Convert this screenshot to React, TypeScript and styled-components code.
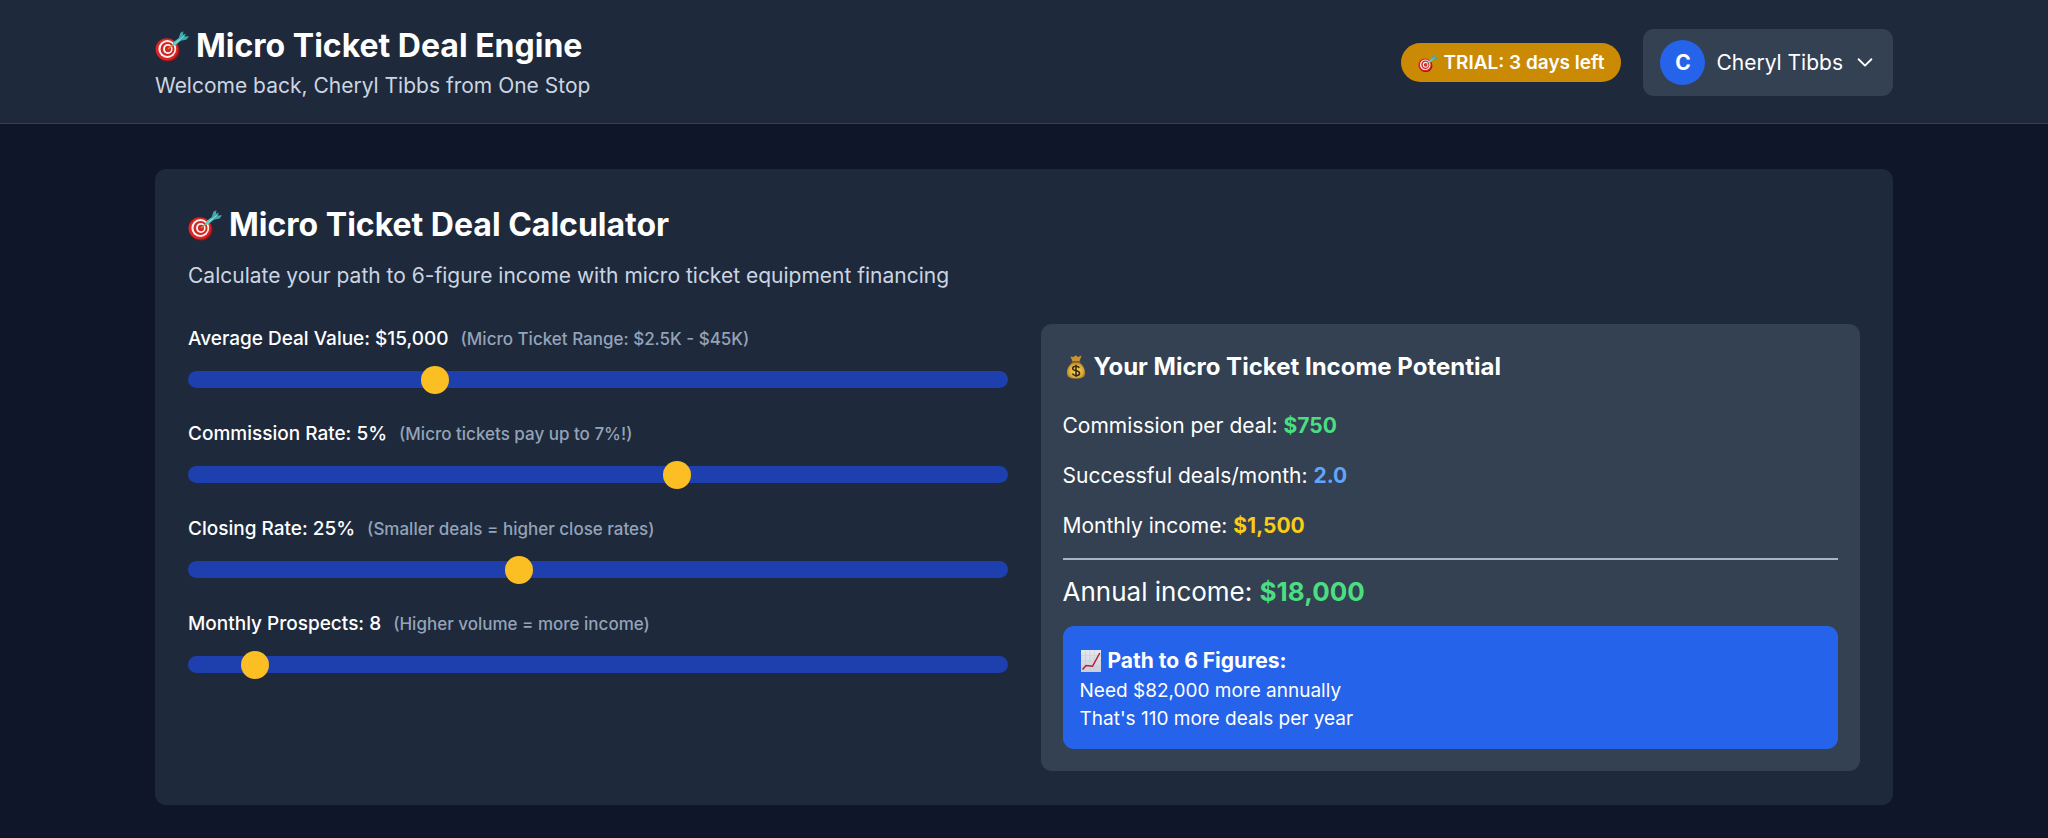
import React, { useState } from "react";
import styled, { createGlobalStyle } from "styled-components";

const GlobalStyle = createGlobalStyle`
  *, *::before, *::after { box-sizing: border-box; }
  body {
    margin: 0;
    background: #101629;
    color: #ffffff;
    font-family: Inter, "Liberation Sans", sans-serif;
    font-size: 21px;
    line-height: 33px;
    -webkit-font-smoothing: antialiased;
  }
  h1, h2, h3, p { margin: 0; }
`;

const Page = styled.div`
  min-height: 100vh;
  background: #101629;
`;

const Container = styled.div`
  width: 100%;
  max-width: 1782px;
  margin: 0 auto;
  padding: 0 22px;
`;

const Header = styled.header`
  background: #1e293b;
  border-bottom: 1px solid #334155;
`;

const HeaderRow = styled(Container)`
  display: flex;
  align-items: center;
  justify-content: space-between;
  flex-wrap: wrap;
  gap: 22px;
  padding-top: 22px;
  padding-bottom: 21px;
`;

const titleText = `
  display: flex;
  align-items: center;
  font-weight: 700;
`;

const PageTitle = styled.h1`
  ${titleText}
  gap: 7px;
  font-size: 32px;
  line-height: 47px;
`;

const CardTitle = styled.h2`
  ${titleText}
  gap: 7px;
  margin-bottom: 12px;
  font-size: 32px;
  line-height: 45px;
`;

const Subtitle = styled.p`
  color: #cbd5e1;
`;

const HeaderActions = styled.div`
  display: flex;
  align-items: center;
  gap: 22px;
`;

const TrialBadge = styled.span`
  display: inline-flex;
  align-items: center;
  gap: 5px;
  padding: 6px 17px 5px;
  border-radius: 20px;
  background: #ca8a04;
  font-size: 19px;
  font-weight: 600;
  line-height: 28px;
`;

const UserButton = styled.button`
  display: flex;
  align-items: center;
  gap: 11px;
  padding: 11px 17px;
  border: 0;
  border-radius: 11px;
  background: #334153;
  color: inherit;
  font: inherit;
  cursor: pointer;
`;

const Avatar = styled.span`
  display: grid;
  place-items: center;
  width: 45px;
  height: 45px;
  border-radius: 50%;
  background: #2563eb;
  font-weight: 700;
`;

const Main = styled(Container).attrs({ as: "main" })`
  padding-top: 45px;
  padding-bottom: 33px;
`;

const Card = styled.section`
  padding: 33px 33px 34px;
  border-radius: 11px;
  background: #1e293b;
`;

const Columns = styled.div`
  display: grid;
  grid-template-columns: 1fr 1fr;
  gap: 33px;
  margin-top: 32px;

  @media (max-width: 1000px) {
    grid-template-columns: 1fr;
  }
`;

const SliderList = styled.div`
  display: flex;
  flex-direction: column;
  gap: 31px;
`;

const Field = styled.div`
  display: flex;
  flex-direction: column;
  gap: 17px;
`;

const FieldLabel = styled.label`
  font-size: 19px;
  font-weight: 500;
  line-height: 30px;
`;

const Hint = styled.span`
  margin-left: 12px;
  color: #94a3b8;
  font-size: 17px;
`;

const Range = styled.input`
  appearance: none;
  display: block;
  width: 100%;
  height: 17px;
  margin: 0;
  border-radius: 11px;
  background: #1e40af;
  cursor: pointer;

  &::-webkit-slider-thumb {
    appearance: none;
    width: 28px;
    height: 28px;
    border-radius: 50%;
    background: #fbbf24;
  }

  &::-moz-range-thumb {
    width: 28px;
    height: 28px;
    border: 0;
    border-radius: 50%;
    background: #fbbf24;
  }
`;

const Panel = styled.section`
  padding: 22px;
  border-radius: 11px;
  background: #334153;
`;

const PanelTitle = styled.h3`
  ${titleText}
  gap: 5px;
  margin-bottom: 22px;
  font-size: 24px;
  line-height: 41px;
`;

const Stats = styled.div`
  display: flex;
  flex-direction: column;
  gap: 17px;
`;

const Amount = styled.strong<{ $tone: string }>`
  color: ${(p) => p.$tone};
  font-weight: 700;
`;

const Annual = styled.p`
  margin-top: 16px;
  padding-top: 12px;
  border-top: 2px solid #a9b5c4;
  font-size: 26px;
  line-height: 39px;
`;

const PathBox = styled.div`
  margin-top: 15px;
  padding: 18px 17px 16px;
  border-radius: 11px;
  background: #2563eb;
  font-size: 19px;
  line-height: 28px;
`;

const PathTitle = styled.p`
  ${titleText}
  gap: 6px;
  font-size: 21px;
  line-height: 33px;
`;

const DartIcon = ({ size }: { size: number }) => (
  <svg width={size} height={size} viewBox="0 0 34 34" aria-hidden="true">
    <ellipse cx="13" cy="21.5" rx="11.5" ry="11" fill="#9f1414" />
    <ellipse cx="11.8" cy="20.2" rx="11.3" ry="11" fill="#dc2626" />
    <ellipse cx="12.3" cy="20" rx="8.9" ry="9" fill="#f8f1ee" />
    <ellipse cx="12.5" cy="20" rx="7" ry="7.1" fill="#d42424" />
    <ellipse cx="12.8" cy="20" rx="4.8" ry="5" fill="#f8f1ee" />
    <ellipse cx="13" cy="20" rx="3" ry="3.2" fill="#d42424" />
    <path d="M13 20 19 15" stroke="#c98d35" strokeWidth="1.4" />
    <path d="M17 17.2 18.5 13 25 8.3 26.8 10.8 20.8 16Z" fill="#55c1bd" />
    <path d="M23.600 9.600 25.400 3.800 28.400 2.200 28 5.800 31 4.400 29.600 7.600 34 7.200 31.600 10.600 26 11.800Z" fill="#3fa9ab" />
    <path d="M18.600 15.600 28.800 7.400" stroke="#8be0da" strokeWidth="1" />
  </svg>
);

const MoneyBagIcon = ({ size }: { size: number }) => (
  <svg width={size} height={size} viewBox="0 0 26 26" aria-hidden="true">
    <defs>
      <radialGradient id="bag" cx="0.5" cy="0.55" r="0.6">
        <stop offset="0" stopColor="#f7d85e" />
        <stop offset="0.65" stopColor="#dba93a" />
        <stop offset="1" stopColor="#94661c" />
      </radialGradient>
    </defs>
    <path d="M9.700 7.500 7.300 2.400 10.500 3.100 12.600 1.200 15 2.900 18.600 1.600 16.400 7.500Z" fill="#c99534" />
    <path d="M10 8C6 11 3.800 14.500 4 19.500c.1 3.600 2.300 5 9 5s8.900-1.400 9-5C22.200 14.500 20 11 16 8Z" fill="url(#bag)" />
    <path d="M9.300 7.800H16.800" stroke="#8c5a1c" strokeWidth="1.600" strokeLinecap="round" />
    <path d="M16.300 13.800C15.700 12.700 14.600 12.200 13 12.200c-2 0-3.300.9-3.300 2.200 0 3.200 6.900 1.500 6.900 4.800 0 1.500-1.400 2.400-3.500 2.400-1.900 0-3.200-.7-3.700-2M13 10.700V23" fill="none" stroke="#33270f" strokeWidth="1.500" />
  </svg>
);

const ChartIcon = ({ size }: { size: number }) => (
  <svg width={size} height={size} viewBox="0 0 22 22" aria-hidden="true">
    <defs>
      <linearGradient id="sheet" x1="0" y1="0" x2="0" y2="1">
        <stop offset="0" stopColor="#e6e8ee" />
        <stop offset="1" stopColor="#c9ced8" />
      </linearGradient>
    </defs>
    <rect x="1" y="0" width="20" height="22" fill="url(#sheet)" />
    <path d="M5.500 0V22M10 0V22M14.500 0V22M1 5.500H21M1 11H21M1 16.500H21" stroke="#c3cbd9" strokeWidth="0.500" />
    <path d="M2.500 19.500 6 15.500 12.500 16.300 19.800 3" fill="none" stroke="#b91c32" strokeWidth="1.500" />
  </svg>
);

const ChevronIcon = () => (
  <svg width="22" height="22" viewBox="0 0 24 24" fill="none" stroke="currentColor" strokeWidth="2" strokeLinecap="round" strokeLinejoin="round" aria-hidden="true">
    <path d="M19 9l-7 7-7-7" />
  </svg>
);

const money = (n: number) => "$" + Math.round(n).toLocaleString("en-US");

type SliderProps = {
  id: string;
  label: string;
  hint: string;
  min: number;
  max: number;
  step: number;
  value: number;
  onChange: (value: number) => void;
};

const Slider = ({ id, label, hint, onChange, ...range }: SliderProps) => (
  <Field>
    <FieldLabel htmlFor={id}>
      {label}
      <Hint>({hint})</Hint>
    </FieldLabel>
    <Range id={id} type="range" {...range} onChange={(e) => onChange(Number(e.target.value))} />
  </Field>
);

export default function App() {
  const [dealValue, setDealValue] = useState(15000);
  const [commission, setCommission] = useState(5);
  const [closing, setClosing] = useState(25);
  const [prospects, setProspects] = useState(8);

  const perDeal = (dealValue * commission) / 100;
  const deals = (prospects * closing) / 100;
  const monthly = perDeal * deals;
  const annual = monthly * 12;
  const gap = Math.max(0, 100000 - annual);

  return (
    <Page>
      <GlobalStyle />
      <Header>
        <HeaderRow>
          <div>
            <PageTitle>
              <DartIcon size={34} />
              Micro Ticket Deal Engine
            </PageTitle>
            <Subtitle>Welcome back, Cheryl Tibbs from One Stop</Subtitle>
          </div>
          <HeaderActions>
            <TrialBadge>
              <DartIcon size={20} />
              TRIAL: 3 days left
            </TrialBadge>
            <UserButton type="button" aria-haspopup="menu">
              <Avatar>C</Avatar>
              Cheryl Tibbs
              <ChevronIcon />
            </UserButton>
          </HeaderActions>
        </HeaderRow>
      </Header>

      <Main>
        <Card>
          <CardTitle>
            <DartIcon size={34} />
            Micro Ticket Deal Calculator
          </CardTitle>
          <Subtitle>Calculate your path to 6-figure income with micro ticket equipment financing</Subtitle>

          <Columns>
            <SliderList>
              <Slider id="deal-value" label={`Average Deal Value: ${money(dealValue)}`} hint="Micro Ticket Range: $2.5K - $45K" min={2500} max={45000} step={500} value={dealValue} onChange={setDealValue} />
              <Slider id="commission" label={`Commission Rate: ${commission}%`} hint="Micro tickets pay up to 7%!" min={2} max={7} step={0.5} value={commission} onChange={setCommission} />
              <Slider id="closing" label={`Closing Rate: ${closing}%`} hint="Smaller deals = higher close rates" min={15} max={40} step={1} value={closing} onChange={setClosing} />
              <Slider id="prospects" label={`Monthly Prospects: ${prospects}`} hint="Higher volume = more income" min={5} max={50} step={1} value={prospects} onChange={setProspects} />
            </SliderList>

            <Panel>
              <PanelTitle>
                <MoneyBagIcon size={26} />
                Your Micro Ticket Income Potential
              </PanelTitle>
              <Stats>
                <p>Commission per deal: <Amount $tone="#4ade80">{money(perDeal)}</Amount></p>
                <p>Successful deals/month: <Amount $tone="#60a5fa">{deals.toFixed(1)}</Amount></p>
                <p>Monthly income: <Amount $tone="#facc15">{money(monthly)}</Amount></p>
              </Stats>
              <Annual>Annual income: <Amount $tone="#4ade80">{money(annual)}</Amount></Annual>
              <PathBox>
                <PathTitle>
                  <ChartIcon size={22} />
                  Path to 6 Figures:
                </PathTitle>
                <p>Need {money(gap)} more annually</p>
                <p>{`That's ${Math.ceil(gap / perDeal)} more deals per year`}</p>
              </PathBox>
            </Panel>
          </Columns>
        </Card>
      </Main>
    </Page>
  );
}
